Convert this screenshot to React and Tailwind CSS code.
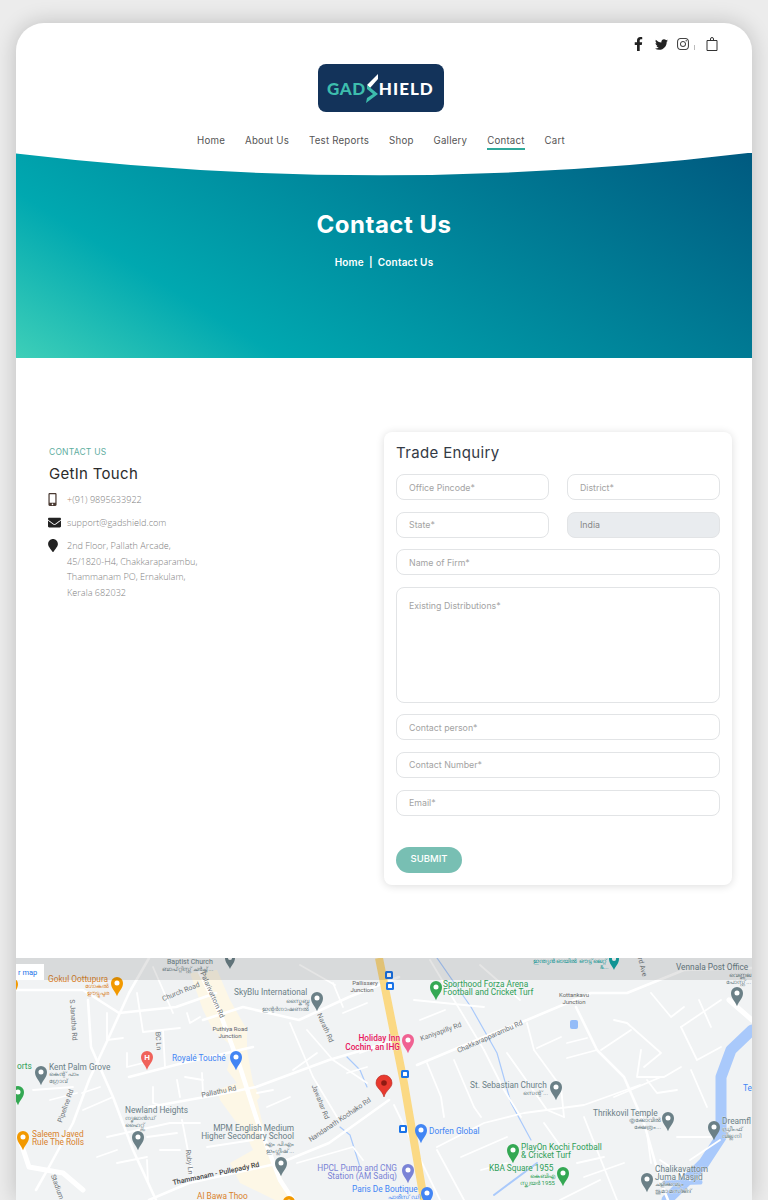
import React from "react";
import { FaFacebookF, FaTwitter, FaInstagram, FaMobileAlt, FaEnvelope, FaMapMarker } from "react-icons/fa";

const navLinks = ["Home", "About Us", "Test Reports", "Shop", "Gallery", "Contact", "Cart"];

// map data uses page coordinates (viewBox starts at 16,958)
const mainRoads = [
  "149,958 129,993 109,1037 89,1080 73,1123 49,1167 36,1190",
  "88,1000 91,1047 113,1097 133,1150 156,1200",
  "17,990 83,990 119,1013 176,1007 216,993",
  "129,1077 183,1063 253,1047",
  "149,1107 216,1095 256,1087 329,1060 363,1050 395,1040",
  "149,1200 189,1183 280,1163 329,1143 389,1100",
  "203,1020 243,1007 299,1020 349,997 399,977",
  "417,1065 484,1037 527,1020 591,993 627,993 684,970 752,968",
  "576,1007 597,1050 624,1077 644,1123 661,1183 668,1200",
];
const wideRoads = ["19,1137 29,1167 63,1173 83,1190", "729,1000 752,1020"];
const smallRoads = [
  "107,1013 107,1040 123,1038", "137,993 143,1032 180,1028", "127,1053 127,1067 143,1063", "163,1030 165,1067",
  "153,1087 153,1103 167,1107", "177,1080 180,1097", "185,1077 203,1080", "202,1073 203,1093",
  "82,1093 100,1087", "83,1110 113,1097", "50,1100 77,1093", "33,1090 73,1087",
  "107,1137 170,1123 200,1123", "147,1137 177,1133", "182,1120 193,1177", "97,1157 117,1150",
  "117,1163 147,1157", "147,1160 148,1183", "160,1150 180,1150", "207,1147 253,1140",
  "267,1107 290,1097", "257,1093 273,1090", "290,1023 313,1077 337,1117", "293,1070 317,1053",
  "307,1030 333,1060 367,1083", "333,983 343,1007", "343,1013 367,1003", "360,1053 377,1047",
  "347,1073 367,1067", "297,1163 353,1147 363,1160", "153,967 173,1013", "187,1013 190,1023 200,1017",
  "427,1063 441,1097 444,1117", "454,1060 474,1107 481,1117", "484,1050 504,1090 521,1117",
  "507,1053 524,1077 547,1110 564,1117", "527,1023 534,1050 561,1087 564,1117", "537,1048 561,1037",
  "567,1043 587,1038", "567,1058 597,1050", "614,1020 627,1023 661,1053 644,1067", "631,1030 601,1050",
  "641,1050 637,1077 664,1077 681,1067", "614,1097 661,1077", "647,1080 657,1093 677,1090", "691,1070 707,1107",
  "681,1027 697,1060 721,1047", "699,1000 711,1027", "681,1027 721,1000", "651,993 671,1017 684,1007",
  "677,1137 711,1137", "647,1133 651,1163", "584,1117 597,1150 617,1200", "437,1147 484,1123 524,1113 584,1105 640,1085",
  "437,1150 464,1200", "544,1123 561,1147", "577,1163 604,1157", "584,1177 624,1163", "461,1157 507,1137",
  "481,1170 507,1163", "414,1000 484,1007", "430,960 460,1010 484,1050", "394,1105 440,1200", "560,1200 600,1180",
  "690,1160 720,1140", "420,1020 445,1010", "300,965 335,985", "480,965 520,1000", "690,1180 660,1160",
];
const labels = [
  { t: "Gokul Oottupura", x: 48, y: 982, c: "#d9822b" },
  { t: "ഗോകുൽ", x: 109, y: 988, c: "#d9822b", a: "end", s: 6 },
  { t: "ഊട്ടുപുര", x: 109, y: 995, c: "#d9822b", a: "end", s: 6 },
  { t: "SkyBlu International", x: 234, y: 995, c: "#6b8087" },
  { t: "സ്കൈബ്ലൂ", x: 309, y: 1003, c: "#6b8087", a: "end", s: 6 },
  { t: "ഇന്റർനാഷണൽ", x: 309, y: 1011, c: "#6b8087", a: "end", s: 6 },
  { t: "Pallissery", x: 365, y: 985, c: "#666", a: "middle", s: 6 },
  { t: "Junction", x: 362, y: 992, c: "#666", a: "middle", s: 6 },
  { t: "Puthiya Road", x: 230, y: 1031, c: "#666", a: "middle", s: 6 },
  { t: "Junction", x: 230, y: 1038, c: "#666", a: "middle", s: 6 },
  { t: "Holiday Inn", x: 400, y: 1041, c: "#e8175d", a: "end", w: 500 },
  { t: "Cochin, an IHG", x: 400, y: 1050, c: "#e8175d", a: "end", w: 500 },
  { t: "Kottankavu", x: 574, y: 997, c: "#666", a: "middle", s: 6 },
  { t: "Junction", x: 574, y: 1004, c: "#666", a: "middle", s: 6 },
  { t: "Sporthood Forza Arena", x: 443, y: 987, c: "#2e9e57" },
  { t: "Football and Cricket Turf", x: 443, y: 995, c: "#2e9e57" },
  { t: "Vennala Post Office", x: 676, y: 970, c: "#6b8087" },
  { t: "വെണ്ണല", x: 751, y: 977, c: "#6b8087", a: "end", s: 6 },
  { t: "പോസ്റ്റ്...", x: 751, y: 984, c: "#6b8087", a: "end", s: 6 },
  { t: "Royalé Touché", x: 172, y: 1061, c: "#4285f4" },
  { t: "Kent Palm Grove", x: 49, y: 1070, c: "#6b8087" },
  { t: "കെന്റ് പാം", x: 49, y: 1076, c: "#6b8087", s: 6 },
  { t: "ഗ്രോവ്", x: 49, y: 1083, c: "#6b8087", s: 6 },
  { t: "orts", x: 17, y: 1069, c: "#2e9e57" },
  { t: "Newland Heights", x: 125, y: 1113, c: "#6b8087" },
  { t: "ന്യൂലാൻഡ്", x: 125, y: 1120, c: "#6b8087", s: 6 },
  { t: "ഹൈറ്റ്സ്", x: 125, y: 1127, c: "#6b8087", s: 6 },
  { t: "MPM English Medium", x: 294, y: 1131, c: "#6b8087", a: "end" },
  { t: "Higher Secondary School", x: 294, y: 1139, c: "#6b8087", a: "end" },
  { t: "എം പി എം", x: 294, y: 1146, c: "#6b8087", a: "end", s: 6 },
  { t: "ഇംഗ്ലീഷ്...", x: 294, y: 1153, c: "#6b8087", a: "end", s: 6 },
  { t: "Saleem Javed", x: 32, y: 1137, c: "#d9822b" },
  { t: "Rule The Rolls", x: 32, y: 1145, c: "#d9822b" },
  { t: "Al Bawa Thoo", x: 197, y: 1199, c: "#d9822b" },
  { t: "HPCL Pump and CNG", x: 397, y: 1171, c: "#7a83d6", a: "end" },
  { t: "Station (AM Sadiq)", x: 397, y: 1179, c: "#7a83d6", a: "end" },
  { t: "Paris De Boutique", x: 352, y: 1192, c: "#4285f4" },
  { t: "പാരീസ് ഡി", x: 420, y: 1199, c: "#4285f4", a: "end", s: 6 },
  { t: "Dorfen Global", x: 429, y: 1134, c: "#4285f4" },
  { t: "St. Sebastian Church", x: 470, y: 1088, c: "#6b8087" },
  { t: "സെന്റ്...", x: 548, y: 1095, c: "#6b8087", a: "end", s: 6 },
  { t: "PlayOn Kochi Football", x: 521, y: 1150, c: "#2e9e57" },
  { t: "& Cricket Turf", x: 521, y: 1158, c: "#2e9e57" },
  { t: "KBA Square 1955", x: 489, y: 1171, c: "#2e9e57" },
  { t: "കെബിഎ", x: 555, y: 1178, c: "#2e9e57", a: "end", s: 6 },
  { t: "സ്ക്വയർ 1955", x: 555, y: 1185, c: "#2e9e57", a: "end", s: 6 },
  { t: "Thrikkovil Temple", x: 593, y: 1116, c: "#6b8087" },
  { t: "തൃക്കോവിൽ", x: 661, y: 1122, c: "#6b8087", a: "end", s: 6 },
  { t: "ക്ഷേത്രം...", x: 661, y: 1129, c: "#6b8087", a: "end", s: 6 },
  { t: "Dreamfl", x: 722, y: 1124, c: "#6b8087" },
  { t: "ഡ്രീംഫ്", x: 722, y: 1131, c: "#6b8087", s: 6 },
  { t: "വില്ല നി", x: 722, y: 1138, c: "#6b8087", s: 6 },
  { t: "Chalikavattom", x: 655, y: 1172, c: "#6b8087" },
  { t: "Juma Masjid", x: 655, y: 1180, c: "#6b8087" },
  { t: "ചളിക്കവട്ടം", x: 655, y: 1186, c: "#6b8087", s: 6 },
  { t: "ജുമാ മസ്ജിദ്", x: 655, y: 1193, c: "#6b8087", s: 6 },
  { t: "Te", x: 743, y: 1091, c: "#4285f4" },
  { t: "Baptist Church", x: 167, y: 964, c: "#6b8087", s: 7 },
  { t: "ബാപ്റ്റിസ്റ്റ് ചർച്ച്...", x: 162, y: 971, c: "#6b8087", s: 6 },
  { t: "ഇന്ത്യൻ ഓയിൽ ഔട്ട്‌ലെറ്റ്", x: 533, y: 963, c: "#12a5a5", s: 6 },
  { t: "&...", x: 600, y: 969, c: "#12a5a5", s: 6 },
];
const roadLabels = [
  { t: "Church Road", x: 181, y: 992, r: -22 },
  { t: "Palarivattom Rd", x: 212, y: 995, r: 66 },
  { t: "Narath Rd", x: 325, y: 1028, r: 66 },
  { t: "Kaniyapilly Rd", x: 441, y: 1032, r: -20 },
  { t: "Chakkarapparambu Rd", x: 490, y: 1037, r: -24 },
  { t: "S Janatha Rd", x: 73, y: 1020, r: 86 },
  { t: "BC Ln", x: 158, y: 1041, r: 86 },
  { t: "Pipeline Rd", x: 66, y: 1106, r: -70 },
  { t: "Pallathu Rd", x: 219, y: 1092, r: -12 },
  { t: "Jawahar Rd", x: 320, y: 1102, r: 68 },
  { t: "Nandanath Kochako Rd", x: 340, y: 1120, r: -34 },
  { t: "Ruby Ln", x: 189, y: 1162, r: 84 },
  { t: "Thammanam - Pullepady Rd", x: 216, y: 1174, r: -12, c: "#3c4043" },
  { t: "Stadium", x: 57, y: 1187, r: 70 },
  { t: "rd Ave", x: 642, y: 967, r: 76 },
];
const pins = [
  { x: 117, y: 983, c: "#f29900", r: 6 },
  { x: 12, y: 984, c: "#f29900", r: 6 },
  { x: 317, y: 998, c: "#6b8087", r: 6 },
  { x: 408, y: 1040, c: "#f06292", r: 6 },
  { x: 436, y: 987, c: "#34a853", r: 6 },
  { x: 737, y: 993, c: "#6b8087", r: 6 },
  { x: 236, y: 1057, c: "#4285f4", r: 6 },
  { x: 41, y: 1072, c: "#6b8087", r: 6 },
  { x: 18, y: 1092, c: "#34a853", r: 6 },
  { x: 138, y: 1137, c: "#6b8087", r: 6 },
  { x: 281, y: 1163, c: "#6b8087", r: 6 },
  { x: 23, y: 1137, c: "#f29900", r: 6 },
  { x: 289, y: 1202, c: "#f29900", r: 6 },
  { x: 408, y: 1170, c: "#7a83d6", r: 6 },
  { x: 427, y: 1193, c: "#4285f4", r: 6 },
  { x: 421, y: 1130, c: "#4285f4", r: 6 },
  { x: 556, y: 1087, c: "#6b8087", r: 6 },
  { x: 513, y: 1150, c: "#34a853", r: 6 },
  { x: 563, y: 1173, c: "#34a853", r: 6 },
  { x: 668, y: 1118, c: "#6b8087", r: 6 },
  { x: 714, y: 1127, c: "#6b8087", r: 6 },
  { x: 647, y: 1179, c: "#6b8087", r: 6 },
  { x: 230, y: 958, c: "#6b8087", r: 5 },
  { x: 614, y: 959, c: "#12a5a5", r: 5 },
];
const busStops = [
  [389, 975],
  [390, 986],
  [405, 1074],
  [403, 1129],
];

const Pin = ({ x, y, c, r }) => (
  <g transform={`translate(${x} ${y}) scale(${r})`}>
    <path d="M0 2.2C-.3 1.4-1 .9-1 0A1 1 0 1 1 1 0C1 .9.3 1.4 0 2.2Z" fill={c} />
    <circle r=".42" fill="#fff" />
  </g>
);

const MapView = () => (
  <svg viewBox="16 958 736 242" className="block w-[736px] h-[242px] [font-family:Roboto,sans-serif]">
    <rect x="16" y="958" width="736" height="242" fill="#f1f3f4" />
    {/* quartier commercial le long de la route */}
    <path
      d="M190 973 217 970 230 1000 247 1030 247 1050 253 1083 260 1097 257 1100 267 1143 287 1190 293 1200 275 1200 240 1183 230 1163 253 1150 247 1137 220 1100 217 1090 237 1083 227 1070 233 1047 213 1030 203 1010Z"
      fill="#fdf7e6"
    />
    <g fill="none" stroke="#a9c9fb" strokeLinejoin="round" strokeLinecap="round">
      <polyline points="752,1030 731,1050 721,1077 721,1137 704,1163 677,1190 667,1200" strokeWidth="11" />
      <polyline points="437,958 471,1007 497,1053 511,1103 531,1140" strokeWidth="1.2" />
      <polyline points="347,1057 360,1070 367,1087" strokeWidth="1.2" />
      <polyline points="340,1127 350,1135 360,1167" strokeWidth="1.2" />
      <polyline points="494,1195 537,1163" strokeWidth="2" />
      <polyline points="665,1183 700,1182" strokeWidth="5" />
    </g>
    <rect x="570" y="1020" width="8" height="9" rx="2" fill="#94bcf8" />
    <g fill="none" stroke="#fff" strokeLinejoin="round" strokeLinecap="round">
      {smallRoads.map((p, i) => (
        <polyline key={i} points={p} strokeWidth="1.8" />
      ))}
      {mainRoads.map((p, i) => (
        <polyline key={i} points={p} strokeWidth="2.6" />
      ))}
      {wideRoads.map((p, i) => (
        <polyline key={i} points={p} strokeWidth="5" />
      ))}
      <polyline points="200,972 220,1013 240,1067 257,1120 280,1180 293,1200" strokeWidth="4.5" />
    </g>
    <polyline points="379,958 404,1083 424,1200" fill="none" stroke="#fbd984" strokeWidth="8" />
    {pins.map((p, i) => (
      <Pin key={i} {...p} />
    ))}
    {busStops.map(([x, y], i) => (
      <g key={i}>
        <rect x={x - 4} y={y - 4} width="8" height="8" rx="1.5" fill="#1a73e8" />
        <rect x={x - 2} y={y - 2} width="4" height="4" rx=".5" fill="#fff" />
      </g>
    ))}
    <g>
      <path d="M147 1070C145.5 1065 141 1062 141 1057A6 6 0 1 1 153 1057C153 1062 148.5 1065 147 1070Z" fill="#f0625a" />
      <text x="147" y="1060" textAnchor="middle" fontSize="8" fontWeight="700" fill="#fff">H</text>
    </g>
    <g fontSize="8.3" stroke="#f1f3f4" strokeWidth="0.4" paintOrder="stroke">
      {labels.map((l, i) => (
        <text key={i} x={l.x} y={l.y} fill={l.c} fontSize={l.s} fontWeight={l.w} textAnchor={l.a}>
          {l.t}
        </text>
      ))}
    </g>
    <g fontSize="7">
      {roadLabels.map((l, i) => (
        <text
          key={i}
          x={l.x}
          y={l.y}
          fill={l.c || "#6f7478"}
          fontWeight={l.c ? 500 : 400}
          textAnchor="middle"
          dominantBaseline="middle"
          transform={`rotate(${l.r} ${l.x} ${l.y})`}
        >
          {l.t}
        </text>
      ))}
    </g>
    {/* marqueur rouge */}
    <path d="M384 1097C382 1090 376 1088 376 1083A8 8 0 1 1 392 1083C392 1088 386 1090 384 1097Z" fill="#e8392e" stroke="#b3261e" strokeWidth=".6" />
    <circle cx="384" cy="1083" r="2.8" fill="#8e1a12" />
    {/* bandeau gris du haut */}
    <rect x="16" y="958" width="736" height="22" fill="#000" fillOpacity=".1" />
    <rect x="16" y="964" width="28" height="16" fill="#fff" />
    <text x="18" y="975" fontSize="7.5" fill="#1a73e8">r map</text>
  </svg>
);

const Field = ({ placeholder, disabled, value, className = "" }) => (
  <input
    type="text"
    placeholder={placeholder}
    disabled={disabled}
    defaultValue={value}
    className={`h-[26px] w-full rounded-lg border border-[#e2e4e6] px-3 text-[8.8px] text-[#888] placeholder:text-[#a3a3a3] outline-none ${disabled ? "bg-[#e9ecef]" : "bg-white"} ${className}`}
  />
);

const App = () => {
  return (
    <div className="h-[1200px] overflow-hidden bg-[#ececec] px-4 pt-[23px] [font-family:Inter,sans-serif]">
      <div className="h-[1177px] overflow-hidden rounded-t-[28px] bg-white shadow-[0_0_22px_rgba(0,0,0,0.2)]">
        {/* Header */}
        <header className="flex h-[130px] flex-col items-center">
          <div className="flex h-[41px] w-full items-center justify-end pr-[34px] pt-[1px] text-[#222]">
            <FaFacebookF className="mr-[12px] h-[14px] w-[9px]" />
            <FaTwitter className="mr-[9px] h-[13px] w-[13px]" />
            <FaInstagram className="mr-[5px] h-[14px] w-[12px] text-[#444]" />
            <span className="mr-[11px] mt-[7px] h-[5px] w-px bg-[#bbb]" />
            <svg viewBox="0 0 12 14" className="h-[14px] w-[12px]" fill="none" stroke="#333" strokeWidth="1">
              <path d="M1 3.5H11V13.5H1Z" />
              <path d="M4.5 3.5V2A1.5 1.5 0 0 1 7.5 2V3.5" />
            </svg>
          </div>
          <div className="mr-[6px] flex h-[48px] w-[126px] items-center rounded-lg bg-[#13335a] pl-[9px] text-[17px] font-black leading-none [font-family:Lato,sans-serif]">
            <span className="tracking-[0.6px] text-[#3dbdad]">GAD</span>
            <svg viewBox="0 0 13 29" className="h-[29px] w-[13px]">
              <path d="M12 0 1 11 4 14 12 5Z" fill="#fff" />
              <path d="M1 11 12 20 0 29 1 24 7 20 1 15Z" fill="#3dbdad" />
            </svg>
            <span className="tracking-[1px] text-white">HIELD</span>
          </div>
          <nav className="mr-[6px] mt-[19px] flex gap-5 text-[9.7px] leading-[19px] tracking-[0.2px] text-[#555]">
            {navLinks.map((link) => (
              <a
                key={link}
                href="#"
                className={link === "Contact" ? "h-[19px] border-b-2 border-[#2fa89a]" : "h-[19px]"}
              >
                {link}
              </a>
            ))}
          </nav>
        </header>

        {/* Hero */}
        <section className="relative flex h-[205px] flex-col items-center bg-[linear-gradient(32deg,#3ecfb8_0%,#00a8b0_25%,#005a80_100%)] pt-[56px] text-white">
          <svg viewBox="0 0 736 23" className="absolute left-0 top-0 h-[23px] w-[736px]">
            <path d="M0 0.5Q368 44.5 736 -0.5V0H0Z" fill="#fff" />
          </svg>
          <h1 className="text-[24px] font-bold leading-8 tracking-[0.5px]">Contact Us</h1>
          <p className="mt-[13px] flex gap-[5px] text-[10px] font-semibold leading-4 tracking-[0.2px]">
            <span>Home</span>
            <span>|</span>
            <span>Contact Us</span>
          </p>
        </section>

        {/* Contact */}
        <section className="flex h-[600px] items-start justify-between pl-[33px] pr-5 pt-[74px]">
          <div className="w-[300px] pt-[14px]">
            <p className="text-[8.5px] leading-3 tracking-[0.2px] text-[#5fae9f]">CONTACT US</p>
            <h3 className="mt-[6px] text-[15px] leading-5 tracking-[0.3px] text-[#2b2b2b]">GetIn Touch</h3>
            <ul className="-ml-px mt-[4px] text-[9.1px] font-light text-[#808080] [font-family:'Open_Sans',sans-serif]">
              <li className="flex h-[23px] items-center">
                <FaMobileAlt className="h-[13px] w-[9px] shrink-0 text-[#4a3a32]" />
                <span className="ml-[10px]">
                  <span className="text-[#b98a6a]">+</span>(91) 9895633922
                </span>
              </li>
              <li className="flex h-[23px] items-center">
                <FaEnvelope className="h-[13px] w-[13px] shrink-0 text-[#222]" />
                <span className="ml-[6px]">support@gadshield.com</span>
              </li>
              <li className="mt-[4px] flex items-start">
                <FaMapMarker className="mt-[1px] h-[13px] w-[10px] shrink-0 text-[#222]" />
                <span className="ml-[9px] leading-[15.7px]">
                  2nd Floor, Pallath Arcade,
                  <br />
                  45/1820-H4, Chakkaraparambu,
                  <br />
                  Thammanam PO, Ernakulam,
                  <br />
                  Kerala 682032
                </span>
              </li>
            </ul>
          </div>

          <form className="h-[453px] w-[348px] rounded-lg bg-white px-3 pt-[10px] shadow-[0_1px_8px_rgba(0,0,0,0.14)]">
            <h2 className="text-[15px] leading-[22px] tracking-[0.35px] text-[#333a45]">Trade Enquiry</h2>
            <div className="mt-[10px] grid grid-cols-2 gap-x-[18px] gap-y-[11.6px]">
              <Field placeholder="Office Pincode*" />
              <Field placeholder="District*" />
              <Field placeholder="State*" />
              <Field disabled value="India" />
              <Field placeholder="Name of Firm*" className="col-span-2" />
              <textarea
                placeholder="Existing Distributions*"
                className="col-span-2 h-[116px] resize-none rounded-lg border border-[#e2e4e6] px-3 py-[11px] text-[8.8px] placeholder:text-[#a3a3a3] outline-none"
              />
              <Field placeholder="Contact person*" className="col-span-2" />
              <Field placeholder="Contact Number*" className="col-span-2" />
              <Field placeholder="Email*" className="col-span-2" />
            </div>
            <button
              type="button"
              className="mt-[31px] h-[26px] w-[66px] rounded-full bg-[#78bfb3] text-[9.5px] font-medium text-white"
            >
              SUBMIT
            </button>
          </form>
        </section>

        <MapView />
      </div>
    </div>
  );
};

export default App;
